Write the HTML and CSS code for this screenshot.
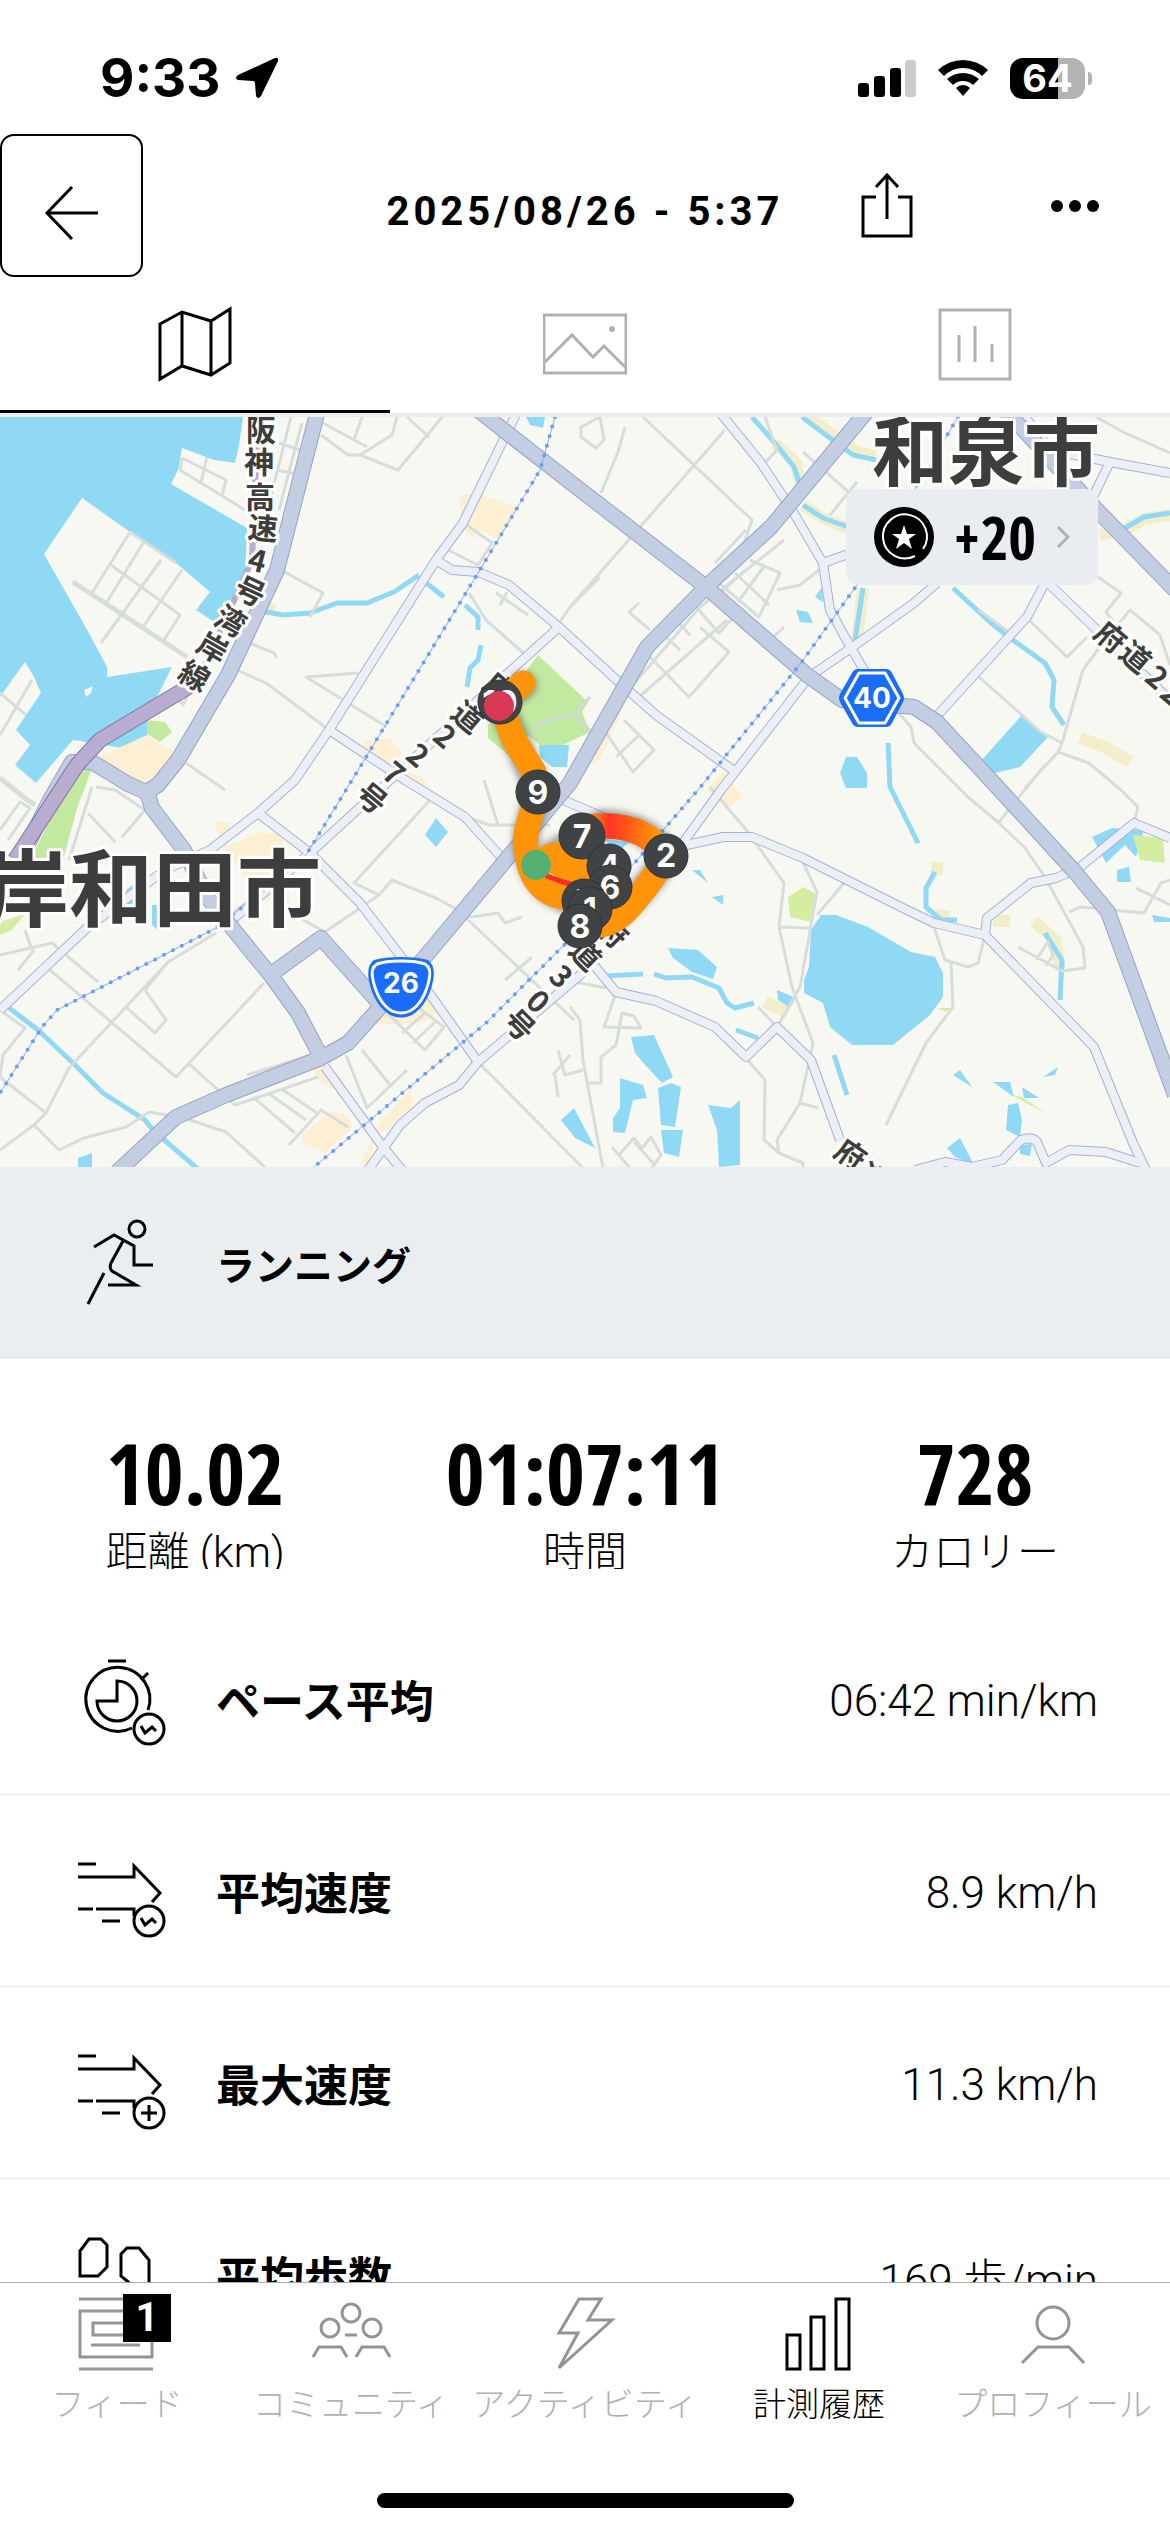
FILE: index.html
```html
<!DOCTYPE html>
<html lang="ja">
<head>
    <meta charset="utf-8">
    <meta name="viewport" content="width=device-width, initial-scale=1">
    <title>2025/08/26 - 5:37</title>
    <link rel="stylesheet" href="styles.css">
</head>
<body>

    <div class="status">
        <div class="status-left">
            <span class="clock">9:33</span>
            <svg class="location" viewBox="0 0 44 42" width="44" height="42"><path d="M40 1L3 18Q-1 21 3 23L18 24Q20 24 20 26L21 39Q23 43 26 39L43 4Q44 0 40 1Z"/></svg>
        </div>
        <div class="status-right">
            <svg viewBox="0 0 58 38" width="58" height="38">
                <rect x="0" y="24" width="11" height="14" rx="3"/>
                <rect x="16" y="17" width="11" height="21" rx="3"/>
                <rect x="32" y="9" width="11" height="29" rx="3"/>
                <rect x="47" y="1" width="11" height="37" rx="3" fill="#cbcbcb"/>
            </svg>
            <svg viewBox="0 0 50 38" width="50" height="38">
                <path d="M25 1Q39 1 50 11L44 17Q36 9 25 9Q14 9 6 17L0 11Q11 1 25 1Z"/>
                <path d="M25 14Q34 14 41 20L35 26Q31 22 25 22Q19 22 15 26L9 20Q16 14 25 14Z"/>
                <path d="M25 26Q29 26 32 29L25 37L18 29Q21 26 25 26Z"/>
            </svg>
            <div class="battery"><span>64</span></div>
        </div>
    </div>

    <header class="header">
        <button class="back" aria-label="戻る">
            <svg class="icon" viewBox="0 0 54 54" width="54" height="54"><path d="M27 1L2 27L27 53M2 27H53"/></svg>
        </button>
        <h1>2025/08/26 - 5:37</h1>
        <div class="actions">
            <button aria-label="共有">
                <svg class="icon" viewBox="0 0 52 66" width="52" height="66"><path d="M15 24H2V63H50V24H37M26 46V3M15 14L26 2L37 14"/></svg>
            </button>
            <button aria-label="その他">
                <svg viewBox="0 0 50 14" width="50" height="14"><circle cx="7" cy="7" r="6"/><circle cx="25" cy="7" r="6"/><circle cx="43" cy="7" r="6"/></svg>
            </button>
        </div>
    </header>

    <nav class="tabs">
        <button class="tab active" aria-label="地図">
            <svg class="icon" viewBox="0 0 84 80" width="84" height="80"><path d="M7 20L29 8L58 17L77 5V59L58 71L29 62L7 75ZM29 8V62M58 17V71"/></svg>
        </button>
        <button class="tab" aria-label="写真">
            <svg class="icon" viewBox="0 0 84 80" width="84" height="80"><path d="M1 11H83V69H1ZM2 58L29 31L50 53L61 42L82 63"/><circle class="solid" cx="69" cy="25" r="3"/></svg>
        </button>
        <button class="tab" aria-label="グラフ">
            <svg class="icon" viewBox="0 0 84 80" width="84" height="80"><path d="M7 6H77V75H7ZM26 31V58M42 22V58M59 40V58"/></svg>
        </button>
    </nav>

    <main>
        <section class="map">
            <svg viewBox="0 417 1170 750" preserveAspectRatio="xMidYMid slice">
                <defs>
                    <g id="minor">
                        <path d="M518 410L463 523L436 560L329 730L295 780L258 813L210 850L165 870L88 927L0 1010"/>
                        <path d="M436 560L452 570L478 572L509 585L559 627L620 683L656 715L733 770"/>
                        <path d="M559 627L390 780L310 853L232 920"/>
                        <path d="M329 730L405 780L465 817L501 857M258 813L310 853L360 903L432 997L478 1062"/>
                        <path d="M593 964L478 1062L459 1085L425 1103L400 1125L368 1170M325 1067L383 1147L402 1170"/>
                        <path d="M593 964L616 992L656 1001L715 1027L746 1057L777 1027L811 1060L840 1140"/>
                        <path d="M563 800L603 817L664 850L723 837L752 837L803 858L903 908L934 923L985 935L1094 1047L1133 1143L1146 1170"/>
                        <path d="M985 935L987 918L1031 883L1056 878L1079 868L1134 823L1170 838"/>
                        <path d="M718 410L761 463L792 510L823 563L830 610L851 648L867 675M823 563L851 553"/>
                        <path d="M937 583L914 603L851 648L809 677L721 790L680 847"/>
                        <path d="M1045 583L1027 617L1006 640L935 718M1048 583L1170 700"/>
                        <path d="M1020 410L1050 450L1110 462L1170 473M1110 462L1090 503"/>
                        <path d="M915 1170L945 1162L972 1167L1002 1160L1021 1140Q1032 1136 1037 1142L1046 1163L1069 1150L1106 1152L1140 1163"/>
                    </g>
                    <g id="major">
                        <path d="M318 410L300 480L277 570L228 675L178 760L158 785L146 792L128 784L92 762L72 762L50 800L10 880"/>
                        <path d="M148 795L152 808L184 850L207 897L272 977L298 1013L321 1057M270 975L321 938L379 1003"/>
                        <path d="M868 410L771 527L706 587L647 647L570 783L425 957L348 1043L321 1058L226 1095L176 1117L117 1172"/>
                        <path d="M478 410L570 482L706 587L807 675L842 700L914 707L937 722L1000 790L1075 872L1108 912L1175 1095"/>
                        <path d="M1005 410L1045 453L1094 507L1175 590"/>
                    </g>
                    <linearGradient id="pace" gradientUnits="userSpaceOnUse" x1="590" y1="0" x2="655" y2="0">
                        <stop offset="0" stop-color="#ff9408"/><stop offset=".3" stop-color="#ff3325"/><stop offset=".6" stop-color="#ff5c16"/><stop offset="1" stop-color="#ff9408"/>
                    </linearGradient>
                    <filter id="soft" x="-20%" y="-20%" width="140%" height="140%"><feGaussianBlur stdDeviation="3"/></filter>
                </defs>

                <!-- land -->
                <rect x="0" y="410" width="1170" height="770" fill="#f8f8f3"/>

                <!-- sea -->
                <path class="water" d="M0 410H244L239 445L235 463L214 460L182 448L178 470L171 484L247 528L245 577L216 623L196 610L210 592L176 563L130 532L82 498L44 554L90 635L107 667V677L172 667L159 693L147 717V738L134 750L73 740L36 783L15 765L30 745L16 730L41 693L34 677L25 662L0 697Z"/>
                <path fill="#f8f8f3" d="M84 690L93 686L91 693L86 697Z"/>

                <!-- parks -->
                <path class="park" d="M82 767L92 768L86 785L78 805L63 860L30 860L40 840L68 785ZM147 720L165 722L172 732L160 742L147 734Z"/>
                <path class="park" d="M538 655L588 702L582 712L590 732L563 745L540 745L528 735L508 755L488 738V725L505 700Z"/>
                <path class="park pale" d="M0 922L25 914L12 930L0 935ZM788 897L803 887L815 893L811 922L790 917ZM1012 1095L1022 1097L1048 1115ZM938 1008L951 1008L946 1012Z"/>

                <!-- built up areas -->
                <path class="town" d="M460 497L475 492L517 508L500 540L476 528V540L462 528ZM103 755L147 735L174 752L155 783L134 780L96 757ZM362 741L390 738L402 752L395 765L425 780L430 790L405 775L370 760ZM214 822H230L228 845L260 832L282 835L290 900L260 900L240 870L225 850ZM301 1135L330 1112L347 1115L352 1128L325 1153L305 1145ZM411 1088L413 1105L375 1140L368 1165H360L378 1125ZM308 1055L325 1065L345 1080L335 1090L318 1080ZM628 694L618 720L600 760L590 765L588 750L605 730ZM735 760L705 790L728 808L743 797L730 780ZM430 1000L440 1010L425 1022L375 1025L372 1000Z"/>

                <!-- rivers and ponds -->
                <path class="bank" d="M775 443L796 463L800 485M803 505L823 518L851 530M808 417L834 436L857 452L876 456M1100 535L1125 530L1144 519L1170 515M863 588L857 640M938 862L936 875M935 915L950 917M993 921H1010M1034 921L1055 940L1060 968M1080 738L1105 747L1130 762M765 1002L788 1013M262 608L275 610"/>
                <path class="river" d="M262 611L283 615L310 613L337 603L367 603L394 592L419 575M425 582L444 597M465 605L478 617V630M481 645L478 660L470 668L467 687M752 417L775 443L794 467L800 485M803 505L823 518L851 528M802 417L830 438L853 455L876 460M953 588L991 623L1010 638L1045 663L1054 680L1052 707L1064 725M1125 528L1144 517L1170 513M863 588L855 640M888 743L890 787L918 843M8 1007L38 1030L73 1063L103 1093L145 1120L153 1130L199 1170"/>
                <path class="river" d="M606 976L643 974M654 974L666 978L692 977L719 988L727 1003L735 1008L754 1003M935 872L926 888V907L941 920H957M1045 933L1062 960L1060 1000M834 1055L847 1095M736 1030L758 1038"/>
                <path class="water" d="M821 915H836L868 927L911 952L935 957L943 973V997L930 1015L893 1045H852L830 1027L823 1003L804 993V980L809 967L811 930Z"/>
                <path class="water" d="M668 948L698 950L717 967L713 979L692 972L673 958ZM631 1037L654 1035L673 1077L662 1083L647 1067L635 1053ZM620 1078L643 1085L647 1098L633 1100L625 1133L613 1132V1118L620 1108ZM658 1088L671 1083L681 1087L675 1127L661 1125ZM661 1130H683L679 1157L664 1153ZM708 1105L731 1108L740 1100V1165L719 1167L717 1130ZM561 1120L574 1108L595 1148L575 1138ZM947 1148L960 1138L974 1165L955 1157ZM953 1075L960 1070L972 1087ZM993 1082H1010L1014 1097ZM1008 1105L1018 1103L1022 1120L1020 1137L1006 1130ZM1022 1087L1039 1098L1024 1098ZM1043 1077L1058 1067L1055 1075ZM1020 1145L1032 1144L1030 1156L1020 1154Z"/>
                <path class="water" d="M1022 715L1048 737L1020 767L995 773L979 763ZM846 757H857L867 773V788H846L840 773ZM796 610L808 612L813 623L800 622ZM815 597L822 587L823 602ZM1092 837L1112 828L1144 830L1136 857L1125 845L1106 863ZM1117 870L1129 867L1131 882H1117ZM1152 915L1170 918V922L1154 922ZM692 870H700L708 883ZM712 897L723 895V905ZM777 990L796 998L790 1008L778 1000ZM436 818L448 832L436 847L425 835ZM78 1158L92 1153V1167H78ZM126 890L134 884L136 905H127ZM152 905H157L158 930L152 925ZM526 417H545L543 428L530 425ZM539 745H569L567 767H552L540 757ZM600 838L630 842L620 850Z"/>
                <path class="park pale" d="M1133 835L1163 838L1165 863L1140 860Z"/>

                <!-- streets -->
                <path class="street" d="M323 423L367 447M362 417L354 440M407 417L429 437M321 435L348 455L360 455L398 470L448 410M360 455L392 435L397 417M73 582L187 657M92 593L130 532L176 563M143 543L107 602M111 565L180 615L164 640M161 560L101 643M182 570L143 627M182 458L226 480L222 495M182 458L180 470L245 510M207 457L201 482M291 417L270 500M302 423L279 510M279 443L300 450M277 470L296 474M281 570L323 593L310 617M247 642L274 653L277 658M237 670L266 683L329 730M358 673L306 677L387 727M467 525L492 543L478 565L448 550M469 593L486 620L528 657M600 577L570 607L560 622M496 593L528 615M507 592L500 605M0 693L26 715M32 680L0 735M186 763L225 790M170 690L183 705L190 690"/>
                <path class="street" d="M643 417L752 520L735 570M725 430L570 607M600 417L581 427V437L596 448L604 440L600 417M625 427L618 452L601 493M803 452L861 503M857 482L830 515M765 417L777 450L763 465M719 583L759 617L780 573L750 560M735 573L769 605M765 565L738 602M745 570L722 592M784 540L700 607L620 700M777 590L800 585L823 567M715 563L746 530M696 607L719 633L740 610M673 617L690 635M727 620L639 697M700 627L729 652L689 697L650 657M666 637L680 650M784 627L767 643M639 603L629 612L650 630M604 730L633 772L654 750L624 720M616 757L639 735M1098 577L1121 593L1106 612L1112 620L1105 640L1083 670L1062 743L1058 752L1025 788M1029 620L1067 657L1087 637M979 610L1010 633M979 677L1041 732L1062 743M1058 752L1089 763L1121 790L1138 807L1134 823M899 713L911 727L914 743L968 797L999 823L1025 848L1045 877L1083 947L1085 968L1062 971L1018 947M1096 417L1125 433L1170 453M1045 765L999 822M1069 912L1081 907L1144 913L1161 883L1170 880M1136 888L1170 905M1105 640L1130 610L1160 635L1170 665M1036 960L1048 942L1053 955L1046 966"/>
                <path class="street" d="M710 787L748 832L784 883L779 927L792 987L813 1043L800 1103L777 1140L779 1153L803 1163V1170M802 860L817 892L800 987L777 1027M844 883L817 915M779 927L809 928M934 927L945 960L968 967L978 963L985 935M951 962L953 1007L926 1043L886 1125M746 1058L765 1080L764 1140L779 1153M758 1007L777 1027M800 1103L818 1108M570 1007L580 1020L583 1060L603 1168M616 993L604 1027L641 1028L634 1016L622 1013L616 1045L601 1057V1083H588M612 1147L630 1168M619 1155L634 1138L642 1148L651 1137L661 1155L652 1168M634 1142L655 1165M558 1050L565 1075L583 1070M553 1075L570 1055M555 1075L558 1097M575 982L606 988"/>
                <path class="street" d="M0 955L52 943L98 982M50 970L176 1077L264 983M216 933L168 962L69 1068L46 1113L0 1077L3 1055L25 1028L0 1010M145 990L166 1020L155 1033L127 1008M188 1063L235 1105L318 1077M46 1113L34 1125L59 1150L84 1138L126 1127L149 1112L184 1118L226 1132L268 1170M0 1150L34 1125M253 1097L295 1133M268 1093L306 1120M283 1090L317 1113M289 1145L321 1110L348 1127M247 1075L312 1055M346 1055L367 1108L407 1070M362 1050L390 1085M88 813L115 842M145 990L168 962M96 787L115 790L145 810L122 837M92 787L69 860M430 800L354 883L379 895L392 880L409 887L436 898L471 917L498 913L505 923L522 917M379 895L325 932M325 932L300 918M484 780L498 825M465 817L490 825L550 825M465 917L574 1020M532 957L505 980M478 1062L585 1170M387 1013L425 1050L444 1027L415 1005M402 1033L425 1013M413 1043L437 1020M0 830L20 802L30 808L8 840M32 950L25 930M18 970L34 950"/>
                <path class="street wide" d="M73 582L187 657M0 778L25 798M20 795L35 805"/>
                <path class="street park-road" d="M528 735L542 722L574 714L590 697M574 714L590 730"/>

                <use href="#minor" class="minor-edge"/>
                <use href="#minor" class="minor-fill"/>
                <use href="#major" class="major-edge"/>
                <use href="#major" class="major-fill"/>
                <path class="toll-edge" d="M190 686L100 740L77 765L15 860"/>
                <path class="toll-fill" d="M190 686L100 740L77 765L15 860"/>
                <path class="toll-fill thin" d="M258 417L252 560L205 665L186 690"/>

                <!-- railways -->
                <path class="rail" d="M555 417L540 470L478 573L346 790L306 855L218 927L57 1010L42 1027L0 1093M958 417L928 467L857 585L801 663L698 790L631 867L566 943L486 1023L314 1167"/>
                <path class="rail dots" d="M555 417L540 470L478 573L346 790L306 855L218 927L57 1010L42 1027L0 1093M958 417L928 467L857 585L801 663L698 790L631 867L566 943L486 1023L314 1167"/>

                <!-- place names -->
                <text class="road-name" x="246 244 245 247 246 232 212 194 176" y="441 473 508 538 569 595 623 650 678" rotate="0 0 0 5 15 25 30 30 30">阪神高速4号湾岸線</text>
                <text class="road-name" x="481 449 431 404 380 353" y="687 716 739 758 776 797" rotate="40">府道227号</text>
                <text class="road-name" x="594 567 547 524 501" y="929 952 978 1003 1022" rotate="45">府道30号</text>
                <text class="road-name" x="1092 1117 1143 1158 1173" y="636 656 680 696 712" rotate="40">府道222</text>
                <text class="road-name" x="832 855" y="1155 1179" rotate="35">府道</text>
                <text class="city small" x="872" y="480">和泉市</text>
                <text class="city" x="-15" y="920">岸和田市</text>

                <!-- route shields -->
                <path fill="#1a6dfa" d="M858 669H886Q890 669 892 673L903 694Q905 698 903 702L892 723Q890 727 886 727H858Q854 727 852 723L840 702Q838 698 840 694L852 673Q854 669 858 669Z"/>
                <path class="shield-line" d="M859 673H885L899 698L885 723H859L845 698Z"/>
                <text class="shield" x="872" y="708">40</text>
                <path fill="#1a6dfa" d="M401 957Q418 957 428 960Q436 966 433 981Q428 1005 412 1015Q401 1020 390 1015Q374 1005 369 981Q366 966 374 960Q384 957 401 957Z"/>
                <path class="shield-line" d="M401 961Q417 961 425 964Q432 968 429 980Q424 1003 410 1011Q401 1015 392 1011Q378 1003 373 980Q370 968 377 964Q385 961 401 961Z"/>
                <text class="shield" x="401" y="993">26</text>

                <!-- run -->
                <g class="run">
                    <path class="run-shadow" filter="url(#soft)" d="M523 685L500 703L516 740L538 790L526 835Q528 890 570 900Q590 930 617 915Q643 893 667 857Q650 825 603 823L583 837L555 853"/>
                    <path d="M523 683L500 703L514 740L534 772L537 795L529 822Q522 840 530 868Q540 896 570 898L590 925Q608 928 625 912Q648 888 666 857"/>
                    <path d="M583 850L550 856Q565 872 590 876"/>
                    <path stroke="url(#pace)" d="M666 857Q645 820 585 827"/>
                    <path class="sprint" d="M547 876L560 881L576 886"/>
                </g>
                <g class="pins">
                    <circle cx="500" cy="702" r="22"/><text x="500" y="714">10</text>
                    <circle cx="538" cy="792" r="22"/><text x="538" y="804">9</text>
                    <circle cx="582" cy="836" r="23"/><text x="582" y="848">7</text>
                    <circle cx="666" cy="856" r="22"/><text x="666" y="867">2</text>
                    <circle cx="609" cy="866" r="22"/><text x="609" y="878">4</text>
                    <circle cx="610" cy="887" r="22"/><text x="610" y="899">6</text>
                    <circle cx="584" cy="901" r="22"/><text x="584" y="913">5</text>
                    <circle cx="590" cy="909" r="22"/><text x="590" y="921">1</text>
                    <circle cx="580" cy="926" r="22"/><text x="580" y="938">8</text>
                </g>
                <circle cx="499" cy="706" r="15" fill="#d93954"/>
                <circle cx="536" cy="865" r="15" fill="#53b072"/>
            </svg>

            <a class="points" href="#points">
                <svg viewBox="0 0 60 60" width="60" height="60">
                    <circle cx="30" cy="30" r="30"/>
                    <path d="M41 49A22 22 0 1 1 49 42" fill="none" stroke="#fff" stroke-width="2"/>
                    <path d="M30 18L33 27H42L35 32L38 42L30 36L22 42L25 32L18 27H27Z" fill="#fff"/>
                </svg>
                <span>+20</span>
                <svg viewBox="0 0 14 24" width="14" height="24"><path d="M2 2L12 12L2 22" fill="none" stroke="#aeb2b5" stroke-width="3"/></svg>
            </a>
        </section>

        <section class="activity">
            <svg class="icon" viewBox="0 0 96 96" width="96" height="96"><circle cx="65" cy="14" r="8"/><path d="M22 32L42 20L62 31V50H81M51 26L39 48Q37 53 40 56L64 70H36M32 58L16 89"/></svg>
            <h2>ランニング</h2>
        </section>

        <dl class="totals">
            <div><dt>距離 (km)</dt><dd>10.02</dd></div>
            <div><dt>時間</dt><dd>01:07:11</dd></div>
            <div><dt>カロリー</dt><dd>728</dd></div>
        </dl>

        <dl class="details">
            <div class="row">
                <svg class="icon" viewBox="0 0 96 96" width="96" height="96"><path d="M36 10H54M76 22L69 29M76 59A32 32 0 1 0 60 77M45 50V30A20 20 0 1 1 25 50Z"/><circle cx="77" cy="78" r="15"/><path d="M69 75L73 82L80 76L84 80"/></svg>
                <dt>ペース平均</dt><dd>06:42 min/km</dd>
            </div>
            <div class="row">
                <svg class="icon" viewBox="0 0 96 96" width="96" height="96"><path d="M6 21H24M6 34H62V23L88 50L80 59M6 66H21M24 66H62V73M30 78H48"/><circle cx="77" cy="78" r="15"/><path d="M69 75L73 82L80 76L84 80"/></svg>
                <dt>平均速度</dt><dd>8.9 km/h</dd>
            </div>
            <div class="row">
                <svg class="icon" viewBox="0 0 96 96" width="96" height="96"><path d="M6 21H24M6 34H62V23L88 50L80 59M6 66H21M24 66H62V73M30 78H48"/><circle cx="77" cy="78" r="15"/><path d="M77 70V86M69 78H85"/></svg>
                <dt>最大速度</dt><dd>11.3 km/h</dd>
            </div>
            <div class="row">
                <svg class="icon" viewBox="0 0 96 96" width="96" height="96"><path d="M8 24L17 12H29L35 18V40L26 49H8ZM49 27L55 21H67L77 33V58H60L49 49ZM8 58H26V72L20 80H14L8 72ZM60 67H77V80L71 88H65L60 82Z"/></svg>
                <dt>平均歩数</dt><dd>169 歩/min</dd>
            </div>
        </dl>
    </main>

    <nav class="bottom">
        <ul>
            <li><a href="#feed">
                <svg class="icon" viewBox="0 0 80 80" width="80" height="80"><path d="M2 5H76M3 17H75V63H3ZM16 29H62V41H16ZM14 51H63M2 75H76"/></svg>
                <span class="count">1</span>
                <span>フィード</span>
            </a></li>
            <li><a href="#community">
                <svg class="icon" viewBox="0 0 80 80" width="80" height="80"><circle cx="40" cy="19" r="9"/><circle cx="19" cy="34" r="9"/><circle cx="61" cy="34" r="9"/><path d="M34 41H46M2 63L8 53H30L36 63M45 63L51 53H73L79 63"/></svg>
                <span>コミュニティ</span>
            </a></li>
            <li><a href="#activity">
                <svg class="icon" viewBox="0 0 80 80" width="80" height="80"><path d="M34 5H56L43 26H67L14 74L33 39H14Z"/></svg>
                <span>アクティビティ</span>
            </a></li>
            <li class="current"><a href="#history">
                <svg class="icon" viewBox="0 0 80 80" width="80" height="80"><path d="M8 41H21V75H8ZM32 23H45V75H32ZM57 5H70V75H57Z"/></svg>
                <span>計測履歴</span>
            </a></li>
            <li><a href="#profile">
                <svg class="icon" viewBox="0 0 80 80" width="80" height="80"><circle cx="40" cy="29" r="16"/><path d="M9 69L25 53H56L71 69"/></svg>
                <span>プロフィール</span>
            </a></li>
        </ul>
        <div class="home"></div>
    </nav>

</body>
</html>
```
FILE: styles.css
```css
* {
    box-sizing: border-box;
    margin: 0;
    padding: 0;
}
body {
    display: flex;
    flex-direction: column;
    height: 100vh;
    overflow: hidden;
    background: #fff;
    color: #000;
    font-family: Roboto, "Noto Sans CJK JP", sans-serif;
    font-size: 44px;
}
button {
    background: none;
    border: none;
    color: inherit;
    font: inherit;
    cursor: pointer;
}
a {
    color: inherit;
    text-decoration: none;
}
svg {
    display: block;
    flex-shrink: 0;
}
.icon {
    fill: none;
    stroke: currentColor;
    stroke-width: 3;
}
.icon .solid {
    fill: currentColor;
    stroke: none;
}

/* status bar */
.status {
    display: flex;
    justify-content: space-between;
    align-items: center;
    height: 134px;
    padding: 22px 78px 0 100px;
    flex-shrink: 0;
}
.status-left, .status-right {
    display: flex;
    align-items: center;
}
.status-left {
    gap: 14px;
}
.status-right {
    gap: 22px;
}
.clock {
    font-family: Inter, sans-serif;
    font-size: 53px;
    font-weight: 700;
}
.battery {
    position: relative;
    width: 75px;
    height: 41px;
    margin-right: 7px;
    border-radius: 13px;
    background: linear-gradient(90deg, #000 64%, #b3b3b3 64%);
    color: #fff;
    font-family: Inter, sans-serif;
    font-size: 38px;
    font-weight: 700;
    line-height: 41px;
    text-align: center;
}
.battery::after {
    content: "";
    position: absolute;
    right: -7px;
    top: 14px;
    width: 4px;
    height: 13px;
    border-radius: 0 4px 4px 0;
    background: #b3b3b3;
}

/* title row */
.header {
    display: grid;
    grid-template-columns: 1fr auto 1fr;
    align-items: center;
    flex-shrink: 0;
}
.back {
    display: flex;
    align-items: center;
    justify-content: center;
    width: 143px;
    height: 143px;
    padding-top: 14px;
    border: 2px solid #000;
    border-radius: 14px;
}
.header h1 {
    padding-top: 12px;
    font-size: 40px;
    font-weight: 700;
    letter-spacing: 4px;
}
.actions {
    display: flex;
    align-items: center;
    justify-content: flex-end;
    gap: 137px;
    padding-right: 70px;
}

/* view tabs */
.tabs {
    display: flex;
    border-bottom: 4px solid #e9edf0;
    flex-shrink: 0;
}
.tab {
    display: flex;
    flex: 1;
    justify-content: center;
    height: 136px;
    padding-top: 27px;
    color: #aeb2b5;
}
.tab.active {
    border-bottom: 3px solid #000;
    color: #000;
}

main {
    flex: 1;
    min-height: 0;
    overflow: hidden;
}

/* map */
.map {
    position: relative;
}
.map > svg {
    width: 100%;
    height: 750px;
}
.map path, .map use {
    stroke-linejoin: round;
}
.water { fill: #8fd9f5; }
.park { fill: #c2e9a0; }
.park.pale { fill: #d4eda0; }
.town { fill: #fdefd2; }
.bank {
    fill: none;
    stroke: #f3edca;
    stroke-width: 12;
}
.river {
    fill: none;
    stroke: #8fd9f5;
    stroke-width: 5;
}
.street {
    fill: none;
    stroke: #d7dddb;
    stroke-width: 3;
}
.street.wide { stroke-width: 5; }
.street.park-road { stroke: #d2d9da; }
.minor-edge, .minor-fill, .major-edge, .major-fill, .toll-edge, .toll-fill {
    fill: none;
}
.minor-edge { stroke: #a6b1d4; stroke-width: 10; }
.minor-fill { stroke: #ecf0f6; stroke-width: 8; }
.major-edge { stroke: #94a1c8; stroke-width: 16; }
.major-fill { stroke: #c4cee3; stroke-width: 14; }
.toll-edge { stroke: #84729f; stroke-width: 16; }
.toll-fill { stroke: #b8add1; stroke-width: 14; }
.toll-fill.thin { stroke-width: 6; }
.rail {
    fill: none;
    stroke: #86aefa;
    stroke-width: 1;
}
.rail.dots {
    stroke: #6c9cf9;
    stroke-width: 4;
    stroke-linecap: round;
    stroke-dasharray: 0 10;
}
.road-name, .city {
    fill: #3d3d3d;
    stroke: #fff;
    stroke-width: 6;
    stroke-linejoin: round;
    paint-order: stroke;
    font-family: "Noto Sans CJK JP", sans-serif;
    font-size: 30px;
    font-weight: 700;
}
.city {
    font-size: 84px;
}
.city.small {
    font-size: 76px;
}
.shield-line {
    fill: none;
    stroke: #fff;
    stroke-width: 3;
}
.shield, .pins text {
    fill: #fff;
    font-family: Inter, sans-serif;
    font-size: 28px;
    font-weight: 700;
    text-anchor: middle;
}
.pins text {
    font-size: 32px;
}
.pins circle {
    fill: #404346;
    stroke: #2f3133;
    stroke-width: 1;
}
.run path {
    fill: none;
    stroke: #ff9408;
    stroke-width: 25;
    stroke-linecap: round;
}
.run .run-shadow {
    stroke: rgba(80, 80, 80, .5);
    stroke-width: 28;
}
.run [stroke] {
    stroke: url(#pace);
}
.run .sprint {
    stroke: #ff2a28;
    stroke-width: 5;
}
.points {
    position: absolute;
    top: 72px;
    right: 72px;
    display: flex;
    align-items: center;
    gap: 20px;
    height: 96px;
    padding: 0 28px;
    border-radius: 12px;
    background: #e9edf1;
}
.points span, .totals dd {
    font-family: "Open Sans Condensed", "Roboto Condensed", Roboto, sans-serif;
    font-size: 60px;
    font-weight: 700;
}

/* activity type */
.activity {
    display: flex;
    align-items: center;
    gap: 48px;
    height: 192px;
    padding: 0 72px;
    background: #eaeef1;
}
.activity h2 {
    font-size: 39px;
    font-weight: 700;
}

/* totals */
.totals {
    display: flex;
    height: 210px;
    padding-top: 64px;
    margin-bottom: 34px;
    overflow: hidden;
    text-align: center;
}
.totals div {
    display: flex;
    flex: 1;
    flex-direction: column-reverse;
    justify-content: flex-end;
}
.totals dd {
    font-size: 84px;
    line-height: 100px;
}
.totals dt {
    font-size: 42px;
    font-weight: 300;
    line-height: 60px;
}

/* details */
.row {
    display: flex;
    align-items: center;
    height: 192px;
    padding: 0 72px;
    border-bottom: 1px solid #e6eaea;
}
.row dt {
    margin-left: 48px;
    font-weight: 700;
}
.row dd {
    margin-left: auto;
    padding-top: 4px;
    font-weight: 300;
}

/* bottom menu */
.bottom {
    height: 250px;
    padding-top: 11px;
    border-top: 1px solid #a9a9a9;
    background: #fff;
    flex-shrink: 0;
}
.bottom ul {
    display: flex;
    list-style: none;
}
.bottom li {
    flex: 1;
}
.bottom a {
    position: relative;
    display: flex;
    flex-direction: column;
    align-items: center;
    gap: 8px;
    color: #aeb2b5;
    font-size: 33px;
    font-weight: 300;
    line-height: 46px;
    white-space: nowrap;
}
.bottom .icon {
    color: #929496;
}
.bottom .current a, .bottom .current .icon {
    color: #000;
}
.bottom .count {
    position: absolute;
    top: 0;
    left: 123px;
    width: 48px;
    height: 48px;
    background: #000;
    color: #fff;
    font-size: 40px;
    font-weight: 700;
    line-height: 48px;
    text-align: center;
}
.home {
    width: 417px;
    height: 15px;
    margin: 65px auto 0;
    border-radius: 8px;
    background: #000;
}
```
